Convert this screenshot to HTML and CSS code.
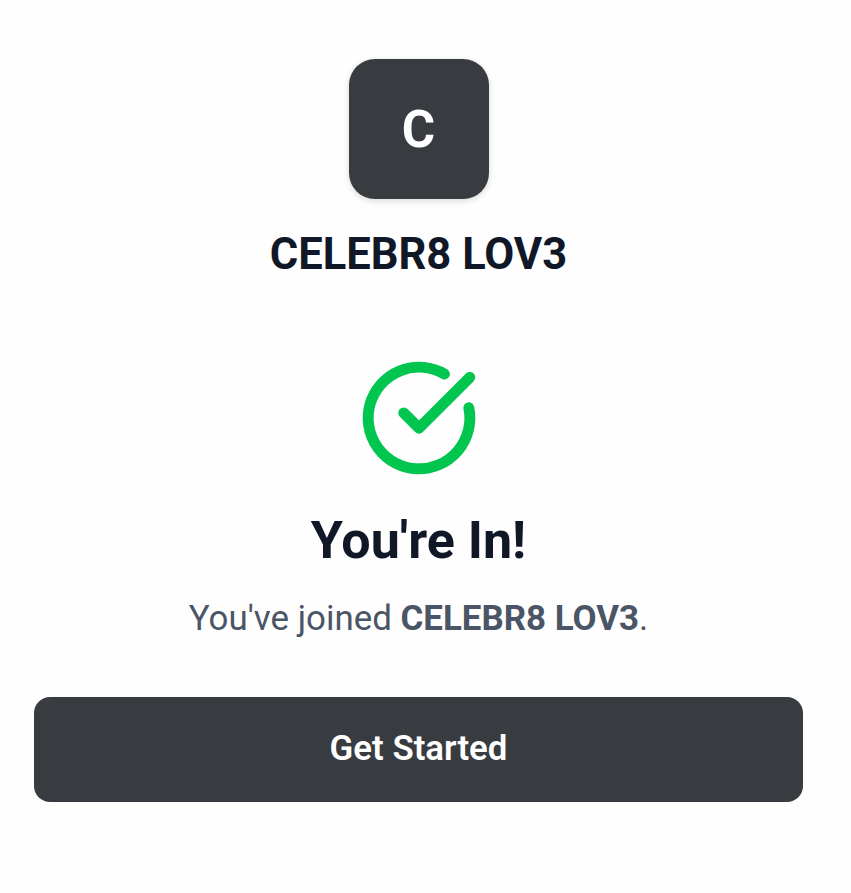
FILE: index.html
```html
<!DOCTYPE html>
<html lang="en">
<head>
    <meta charset="UTF-8">
    <meta name="viewport" content="width=device-width, initial-scale=1.0">
    <title>You're In!</title>
    <link rel="stylesheet" href="styles.css">
</head>
<body>
    <main class="screen">
        <div class="logo">C</div>
        <h2 class="group-name">CELEBR8 LOV3</h2>
        <svg class="check-icon" viewBox="0 0 24 24" fill="none" stroke="#00c64f" stroke-width="2.15" stroke-linecap="round" stroke-linejoin="round">
            <path d="M21.801 10A10 10 0 1 1 17 3.335"/>
            <path d="m9 11 3 3L22 4"/>
        </svg>
        <h1 class="title">You're In!</h1>
        <p class="message">You've joined <strong>CELEBR8 LOV3</strong>.</p>
        <button class="start-button" type="button">Get Started</button>
    </main>
</body>
</html>
```

FILE: styles.css
```css
body {
    font-family: Roboto, "Liberation Sans", sans-serif;
    background-color: #fefefe;
    margin: 0;
}
.screen {
    display: flex;
    flex-direction: column;
    align-items: center;
    box-sizing: border-box;
    height: 893px;
    padding: 59px 48px 0 34px;
}
.logo {
    display: flex;
    align-items: center;
    justify-content: center;
    width: 140px;
    height: 140px;
    background-color: #383b40;
    border-radius: 26px;
    box-shadow: 0 2px 6px rgba(0, 0, 0, 0.15);
    color: white;
    font-size: 51px;
    font-weight: 700;
}
.group-name {
    margin: 32px 0 0;
    font-size: 43.5px;
    line-height: 48px;
    font-weight: 700;
    color: #101828;
}
.check-icon {
    width: 122px;
    height: 122px;
    margin-top: 78px;
}
.title {
    margin: 32px 0 0;
    font-size: 52px;
    line-height: 60px;
    font-weight: 700;
    color: #101828;
}
.message {
    margin: 26px 0 0;
    font-size: 34.9px;
    line-height: 44px;
    color: #4a5565;
}
.message strong {
    font-weight: 700;
}
.start-button {
    width: 769px;
    height: 105px;
    margin-top: 56px;
    padding: 0 0 3px;
    background-color: #383b40;
    color: white;
    border: none;
    border-radius: 16px;
    font-family: inherit;
    font-size: 34.8px;
    font-weight: 600;
}
```
